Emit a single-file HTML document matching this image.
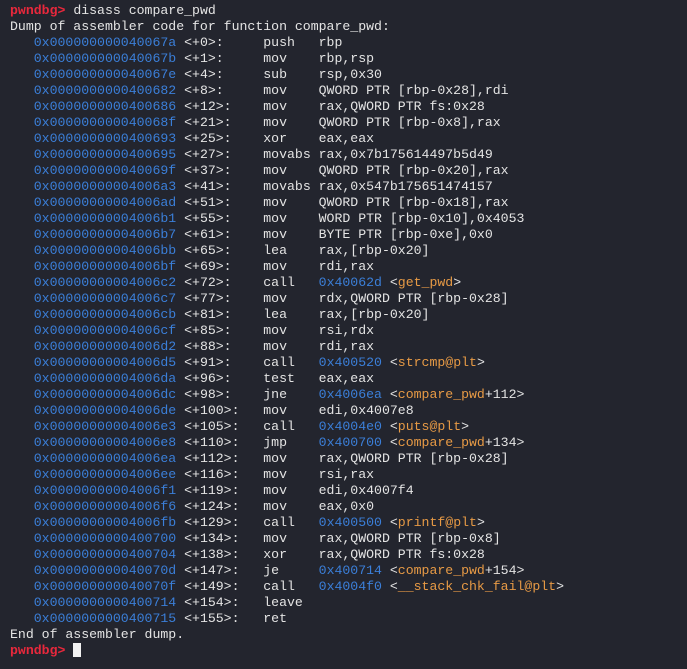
<!DOCTYPE html>
<html><head><meta charset="utf-8"><style>
html,body{margin:0;padding:0;background:#23252e;width:687px;height:669px;overflow:hidden}
pre{margin:0;padding:3px 0 0 10px;font-family:"Liberation Mono","DejaVu Sans Mono",monospace;font-size:13.2px;line-height:16px;color:#e4e4e4}
.r{color:#e8283c;font-weight:bold}
.b{color:#3b7fd9}
.o{color:#e79a45}
.c{display:inline-block;width:8px;height:14px;background:#f2f2f2;vertical-align:-3px}
</style></head><body><pre><span class="r">pwndbg&gt;</span> disass compare_pwd
Dump of assembler code for function compare_pwd:
   <span class="b">0x000000000040067a</span> &lt;+0&gt;:	push   rbp
   <span class="b">0x000000000040067b</span> &lt;+1&gt;:	mov    rbp,rsp
   <span class="b">0x000000000040067e</span> &lt;+4&gt;:	sub    rsp,0x30
   <span class="b">0x0000000000400682</span> &lt;+8&gt;:	mov    QWORD PTR [rbp-0x28],rdi
   <span class="b">0x0000000000400686</span> &lt;+12&gt;:	mov    rax,QWORD PTR fs:0x28
   <span class="b">0x000000000040068f</span> &lt;+21&gt;:	mov    QWORD PTR [rbp-0x8],rax
   <span class="b">0x0000000000400693</span> &lt;+25&gt;:	xor    eax,eax
   <span class="b">0x0000000000400695</span> &lt;+27&gt;:	movabs rax,0x7b175614497b5d49
   <span class="b">0x000000000040069f</span> &lt;+37&gt;:	mov    QWORD PTR [rbp-0x20],rax
   <span class="b">0x00000000004006a3</span> &lt;+41&gt;:	movabs rax,0x547b175651474157
   <span class="b">0x00000000004006ad</span> &lt;+51&gt;:	mov    QWORD PTR [rbp-0x18],rax
   <span class="b">0x00000000004006b1</span> &lt;+55&gt;:	mov    WORD PTR [rbp-0x10],0x4053
   <span class="b">0x00000000004006b7</span> &lt;+61&gt;:	mov    BYTE PTR [rbp-0xe],0x0
   <span class="b">0x00000000004006bb</span> &lt;+65&gt;:	lea    rax,[rbp-0x20]
   <span class="b">0x00000000004006bf</span> &lt;+69&gt;:	mov    rdi,rax
   <span class="b">0x00000000004006c2</span> &lt;+72&gt;:	call   <span class="b">0x40062d</span> &lt;<span class="o">get_pwd</span>&gt;
   <span class="b">0x00000000004006c7</span> &lt;+77&gt;:	mov    rdx,QWORD PTR [rbp-0x28]
   <span class="b">0x00000000004006cb</span> &lt;+81&gt;:	lea    rax,[rbp-0x20]
   <span class="b">0x00000000004006cf</span> &lt;+85&gt;:	mov    rsi,rdx
   <span class="b">0x00000000004006d2</span> &lt;+88&gt;:	mov    rdi,rax
   <span class="b">0x00000000004006d5</span> &lt;+91&gt;:	call   <span class="b">0x400520</span> &lt;<span class="o">strcmp@plt</span>&gt;
   <span class="b">0x00000000004006da</span> &lt;+96&gt;:	test   eax,eax
   <span class="b">0x00000000004006dc</span> &lt;+98&gt;:	jne    <span class="b">0x4006ea</span> &lt;<span class="o">compare_pwd</span>+112&gt;
   <span class="b">0x00000000004006de</span> &lt;+100&gt;:	mov    edi,0x4007e8
   <span class="b">0x00000000004006e3</span> &lt;+105&gt;:	call   <span class="b">0x4004e0</span> &lt;<span class="o">puts@plt</span>&gt;
   <span class="b">0x00000000004006e8</span> &lt;+110&gt;:	jmp    <span class="b">0x400700</span> &lt;<span class="o">compare_pwd</span>+134&gt;
   <span class="b">0x00000000004006ea</span> &lt;+112&gt;:	mov    rax,QWORD PTR [rbp-0x28]
   <span class="b">0x00000000004006ee</span> &lt;+116&gt;:	mov    rsi,rax
   <span class="b">0x00000000004006f1</span> &lt;+119&gt;:	mov    edi,0x4007f4
   <span class="b">0x00000000004006f6</span> &lt;+124&gt;:	mov    eax,0x0
   <span class="b">0x00000000004006fb</span> &lt;+129&gt;:	call   <span class="b">0x400500</span> &lt;<span class="o">printf@plt</span>&gt;
   <span class="b">0x0000000000400700</span> &lt;+134&gt;:	mov    rax,QWORD PTR [rbp-0x8]
   <span class="b">0x0000000000400704</span> &lt;+138&gt;:	xor    rax,QWORD PTR fs:0x28
   <span class="b">0x000000000040070d</span> &lt;+147&gt;:	je     <span class="b">0x400714</span> &lt;<span class="o">compare_pwd</span>+154&gt;
   <span class="b">0x000000000040070f</span> &lt;+149&gt;:	call   <span class="b">0x4004f0</span> &lt;<span class="o">__stack_chk_fail@plt</span>&gt;
   <span class="b">0x0000000000400714</span> &lt;+154&gt;:	leave
   <span class="b">0x0000000000400715</span> &lt;+155&gt;:	ret
End of assembler dump.
<span class="r">pwndbg&gt;</span> <span class="c"></span></pre></body></html>
